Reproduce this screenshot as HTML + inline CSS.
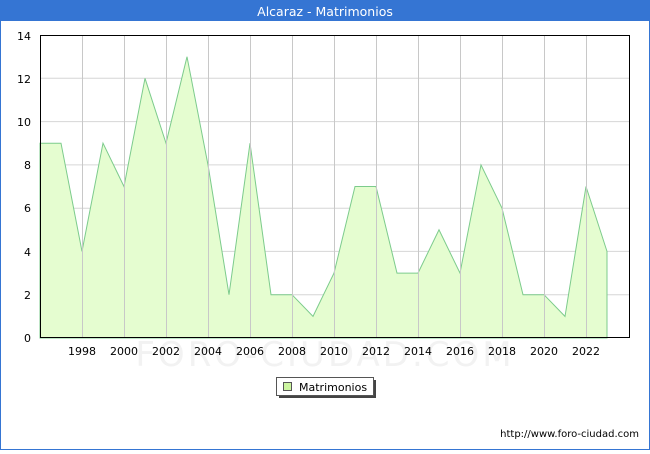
<!DOCTYPE html>
<html><head><meta charset="utf-8"><style>
body{margin:0;width:650px;height:450px;overflow:hidden;font-family:"DejaVu Sans","Liberation Sans",sans-serif;}
</style></head><body>
<svg width="650" height="450" xmlns="http://www.w3.org/2000/svg" font-family="DejaVu Sans, Liberation Sans, sans-serif">
<rect x="0.5" y="0.5" width="649" height="449" fill="#fff" stroke="#3575d3"/>
<rect x="0" y="0" width="650" height="21" fill="#3575d3"/>
<text x="325" y="16" fill="#fff" font-size="12.5" text-anchor="middle">Alcaraz - Matrimonios</text>
<g stroke="#d6d6d6" stroke-width="1">
<line x1="40" x2="630" y1="294.7" y2="294.7"/><line x1="40" x2="630" y1="251.4" y2="251.4"/>
<line x1="40" x2="630" y1="208.2" y2="208.2"/><line x1="40" x2="630" y1="164.9" y2="164.9"/>
<line x1="40" x2="630" y1="121.6" y2="121.6"/><line x1="40" x2="630" y1="78.3" y2="78.3"/>
</g>
<polygon fill="#e5fdd0" stroke="#7ccb8c" stroke-width="1" points="40,338 40,143.2 61,143.2 82,251.4 103,143.2 124,186.5 145,78.3 166,143.2 187,56.7 208,164.9 229,294.7 250,143.2 271,294.7 292,294.7 313,316.4 334,273.1 355,186.5 376,186.5 397,273.1 418,273.1 439,229.8 460,273.1 481,164.9 502,208.2 523,294.7 544,294.7 565,316.4 586,186.5 607,251.4 607,338"/>
<g stroke="#c8c8c8" stroke-width="1">
<line x1="82.5" x2="82.5" y1="35" y2="338"/><line x1="124.5" x2="124.5" y1="35" y2="338"/>
<line x1="166.5" x2="166.5" y1="35" y2="338"/><line x1="208.5" x2="208.5" y1="35" y2="338"/>
<line x1="250.5" x2="250.5" y1="35" y2="338"/><line x1="292.5" x2="292.5" y1="35" y2="338"/>
<line x1="334.5" x2="334.5" y1="35" y2="338"/><line x1="376.5" x2="376.5" y1="35" y2="338"/>
<line x1="418.5" x2="418.5" y1="35" y2="338"/><line x1="460.5" x2="460.5" y1="35" y2="338"/>
<line x1="502.5" x2="502.5" y1="35" y2="338"/><line x1="544.5" x2="544.5" y1="35" y2="338"/>
<line x1="586.5" x2="586.5" y1="35" y2="338"/>
</g>
<text x="325" y="366" font-size="34" fill="#f2f2f2" text-anchor="middle" letter-spacing="3">FORO-CIUDAD.COM</text>
<rect x="40.5" y="35.5" width="589" height="302" fill="none" stroke="#000"/>
<g font-size="11" fill="#000" text-anchor="end">
<text x="31" y="342">0</text><text x="31" y="299">2</text><text x="31" y="256">4</text>
<text x="31" y="212">6</text><text x="31" y="169">8</text><text x="31" y="126">10</text>
<text x="31" y="83">12</text><text x="31" y="40">14</text>
</g>
<g font-size="11" fill="#000" text-anchor="middle">
<text x="82" y="355">1998</text><text x="124" y="355">2000</text><text x="166" y="355">2002</text>
<text x="208" y="355">2004</text><text x="250" y="355">2006</text><text x="292" y="355">2008</text>
<text x="334" y="355">2010</text><text x="376" y="355">2012</text><text x="418" y="355">2014</text>
<text x="460" y="355">2016</text><text x="502" y="355">2018</text><text x="544" y="355">2020</text>
<text x="586" y="355">2022</text>
</g>
<rect x="279" y="380" width="97" height="18" fill="#444"/>
<rect x="276.5" y="377.5" width="97" height="18" fill="#fff" stroke="#555"/>
<rect x="283.5" y="382.5" width="8" height="8" fill="#ccf5a0" stroke="#555"/>
<text x="299" y="391" font-size="11">Matrimonios</text>
<text x="639" y="437" font-size="10" text-anchor="end">http://www.foro-ciudad.com</text>
</svg>
</body></html>
